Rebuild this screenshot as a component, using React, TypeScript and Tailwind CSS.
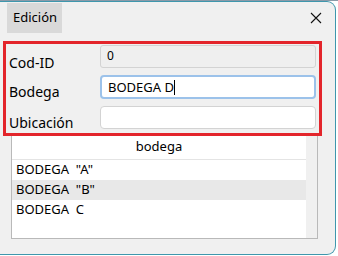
const font = { fontFamily: '"Noto Sans", "Open Sans", sans-serif' };

const rows = ['BODEGA  "A"', 'BODEGA  "B"', "BODEGA  C"];

export default function App() {
  return (
    <div className="relative w-[338px] h-[256px] bg-white overflow-hidden" style={font}>
      <div className="h-[1px] bg-[#8a9aa8]" />
      <div className="relative w-[336px] h-[254px] bg-[#f0f0f0] border border-l-0 border-[#3f97ad] rounded-tr-[9px] rounded-br-[9px]">
        {/* title row */}
        <div className="flex items-start justify-between h-[39px]">
          <div className="ml-[7px] mt-[1px] w-[55px] h-[30px] bg-[#d9d9d9] flex items-center pl-[6px] text-[13px] text-black">
            Edición
          </div>
          <svg className="mt-[10px] mr-[13px]" width="12" height="12" viewBox="0 0 12 12">
            <path d="M1 1 L11 11 M11 1 L1 11" stroke="#111" strokeWidth="1.1" />
          </svg>
        </div>

        {/* form */}
        <div className="flex flex-col gap-[7px] mt-[4px]">
          <div className="flex items-start h-[23px]">
            <span className="w-[100px] pl-[9px] pt-[9px] text-[14px] leading-[18px] text-black">Cod-ID</span>
            <div className="w-[216px] h-[23px] rounded-[3px] border border-[#d3d3d3] bg-[#efefef] px-[6px] text-[12px] leading-[20px] text-black">
              0
            </div>
          </div>
          <div className="flex items-start h-[24px]">
            <span className="w-[100px] pl-[9px] pt-[8px] text-[14px] leading-[18px] text-black">Bodega</span>
            <div className="w-[216px] h-[24px] rounded-[4px] border-2 border-[#9cc2ea] bg-white px-[6px] text-[13px] leading-[20px] text-black flex items-center">
              BODEGA D<span className="w-[1px] h-[15px] bg-black" />
            </div>
          </div>
          <div className="flex items-start h-[23px]">
            <span className="w-[100px] pl-[9px] pt-[8px] text-[14px] leading-[18px] text-black">Ubicación</span>
            <div className="w-[216px] h-[23px] rounded-[4px] border border-[#d3d3d3] bg-white" />
          </div>
        </div>

        {/* table */}
        <div className="ml-[11px] mt-[5px] w-[307px] h-[105px] border border-[#b9b9b9] bg-[#f0f0f0] flex">
          <div className="w-[294px] h-full bg-white flex flex-col">
            <div className="h-[25px] border-b border-[#e4e4e4] flex items-center justify-center text-[13px] text-black">
              bodega
            </div>
            {rows.map((r, i) => (
              <div
                key={r}
                className={`h-[20px] pl-[4px] flex items-center text-[13px] text-black whitespace-pre ${i === 1 ? "bg-[#e8e8e8]" : ""}`}
              >
                {r}
              </div>
            ))}
          </div>
        </div>

        {/* red highlight overlay */}
        <div className="absolute left-[3px] top-[39px] w-[319px] h-[95px] border-[3px] border-[#e3252b]" />
      </div>
    </div>
  );
}
